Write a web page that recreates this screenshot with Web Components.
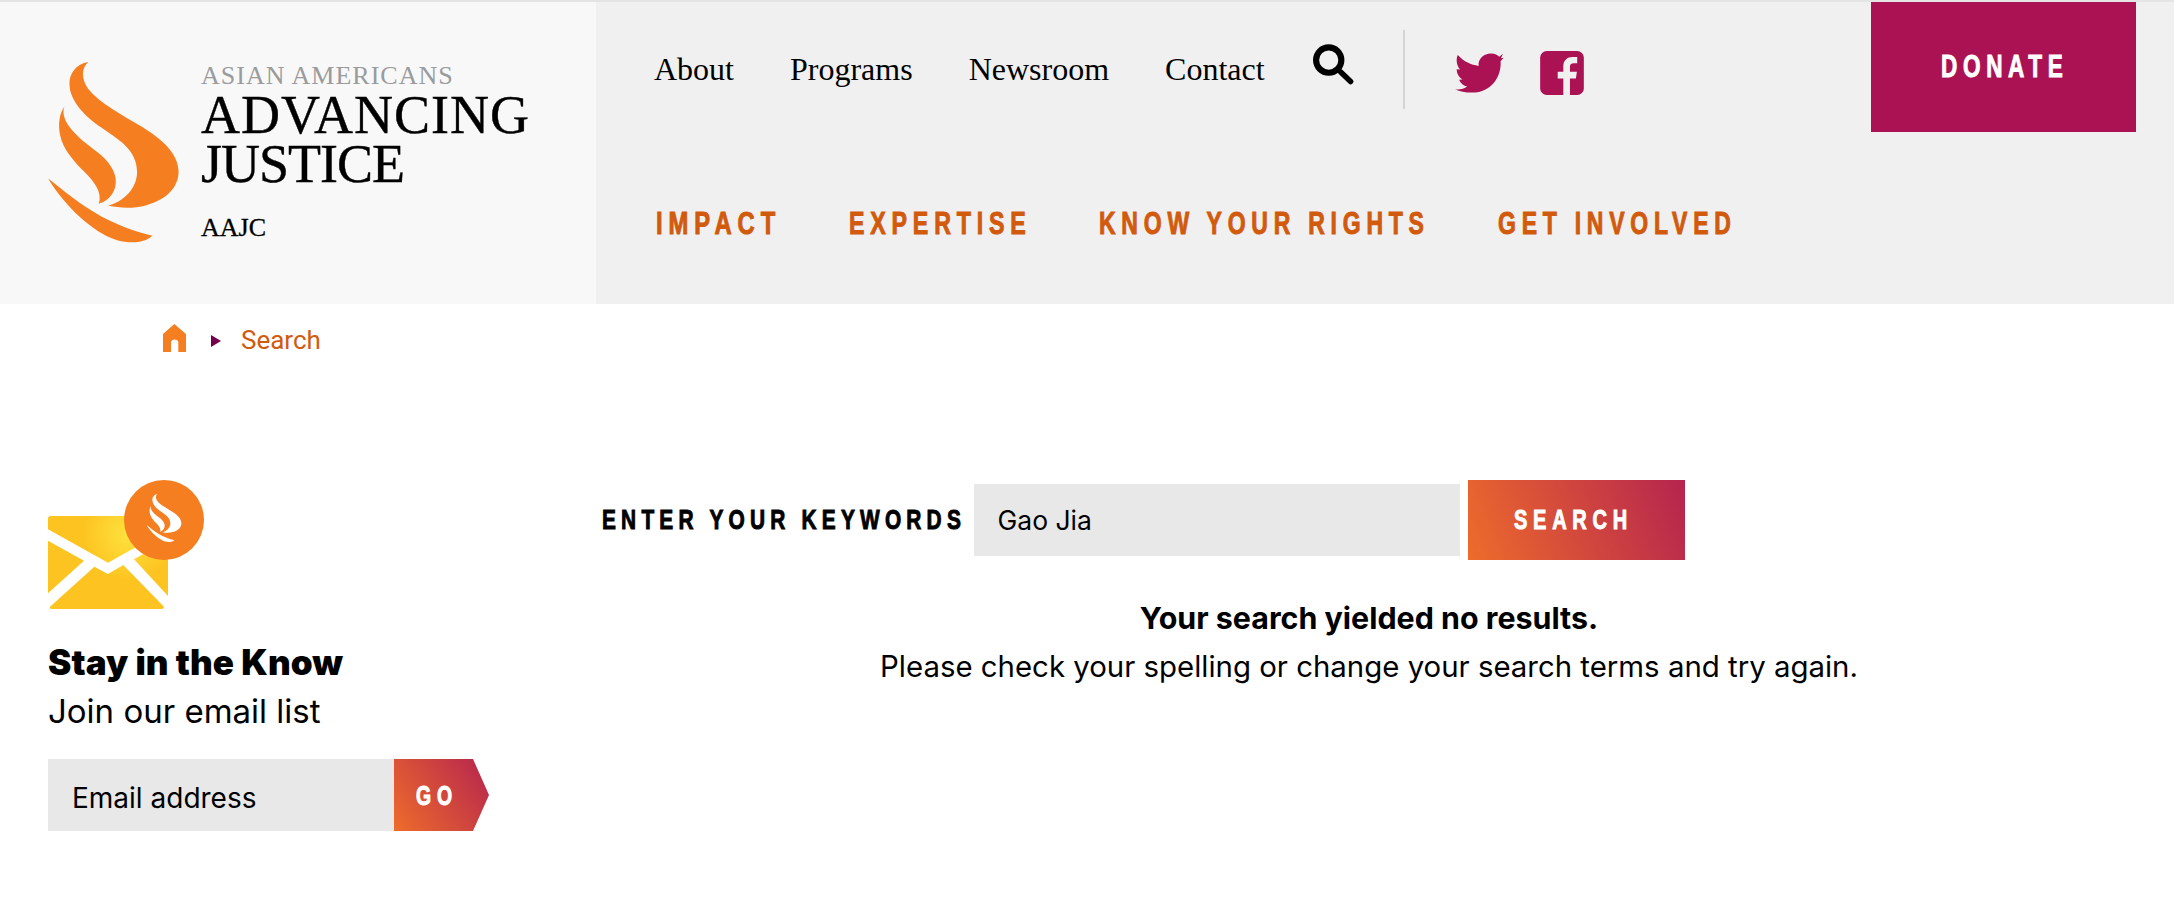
<!DOCTYPE html>
<html lang="en">
<head>
<meta charset="utf-8">
<title>Search | Asian Americans Advancing Justice - AAJC</title>
<style>
  html, body { margin: 0; background: #fff; }
  body { font-family: "Inter", "Liberation Sans", sans-serif; color: #000; }
</style>
</head>
<body>
<site-header>
  <site-logo slot="logo"></site-logo>
  <utility-nav slot="utility"></utility-nav>
  <main-nav slot="main"></main-nav>
</site-header>
<bread-crumb>Search</bread-crumb>
<page-layout>
  <sign-up slot="aside"></sign-up>
  <search-panel query="Gao Jia"></search-panel>
</page-layout>

<script>
const FLAME_UPPER = "M176 66C140 72 118 100 120 135C122 180 160 225 215 262C260 295 322 325 322 395C322 445 280 485 236 495C270 503 310 505 350 494C410 478 447 440 446 392C444 340 400 300 340 262C280 225 210 190 175 145C155 115 155 85 176 66Z";
const FLAME_MIDDLE = "M105 198C90 220 85 250 92 285C100 325 130 360 165 395C195 425 218 455 208 490C240 480 262 450 258 415C254 380 225 350 190 325C150 295 110 260 103 225C101 215 102 205 105 198Z";
const FLAME_LOWER = "M56 414C90 470 150 540 220 580C270 610 335 615 368 585C300 570 230 540 170 500C125 470 90 440 56 414Z";
const HEAVY = '"Liberation Sans", sans-serif';

// no condensed face is installed, so squeeze the text to the width it has to fill
class NarrowText extends HTMLElement {
    connectedCallback() {
        this.attachShadow({mode: "open"});
        this.shadowRoot.innerHTML = `
            <style>
            :host { display: inline-block; white-space: nowrap; font-weight: bold; -webkit-text-stroke: 1px currentColor; }
            span { display: inline-block; transform-origin: 0 50%; }
            </style>
            <span><slot></slot></span>
        `;
        let width = Number(this.getAttribute("width"));
        let span = this.shadowRoot.querySelector("span");
        let spacing = parseFloat(getComputedStyle(this).letterSpacing) || 0;
        span.style.transform = `scaleX(${width / (span.offsetWidth - spacing)})`;
        this.style.width = width + "px";
    }
}

class SiteHeader extends HTMLElement {
    connectedCallback() {
        this.attachShadow({mode: "open"});
        this.shadowRoot.innerHTML = `
            <style>
            :host { display: flex; height: 302px; border-top: 2px solid #e4e4e4; background: #f0f0f0; }
            .logo { flex: 0 0 596px; background: #f8f8f8; }
            .nav { flex: 1; min-width: 0; display: flex; flex-direction: column; }
            </style>
            <div class="logo"><slot name="logo"></slot></div>
            <div class="nav">
                <slot name="utility"></slot>
                <slot name="main"></slot>
            </div>
        `;
    }
}

class SiteLogo extends HTMLElement {
    connectedCallback() {
        this.attachShadow({mode: "open"});
        this.shadowRoot.innerHTML = `
            <style>
            :host { display: flex; padding: 60px 0 0 48px; font-family: "Liberation Serif", serif; color: #000; }
            svg { width: 131px; height: 184px; flex: none; }
            .words { margin-left: 22px; display: flex; flex-direction: column; margin-top: 1px; }
            .asian { font-size: 26px; line-height: 26px; letter-spacing: 1px; color: #9a9b9d; white-space: nowrap; }
            .name { font-size: 54px; line-height: 49px; white-space: nowrap; -webkit-text-stroke: .4px #000; }
            .first { letter-spacing: 1px; margin-top: 1.5px; }
            .second { letter-spacing: -1px; }
            .short { font-size: 26px; line-height: 30px; margin-top: 24.5px; -webkit-text-stroke: .3px #000; }
            </style>
            <svg viewBox="56 66 391 550" fill="#f57e20" aria-hidden="true">
                <path d="${FLAME_UPPER}"/><path d="${FLAME_MIDDLE}"/><path d="${FLAME_LOWER}"/>
            </svg>
            <div class="words">
                <div class="asian">ASIAN AMERICANS</div>
                <div class="name first">ADVANCING</div>
                <div class="name second">JUSTICE</div>
                <div class="short">AAJC</div>
            </div>
        `;
    }
}

class UtilityNav extends HTMLElement {
    connectedCallback() {
        this.attachShadow({mode: "open"});
        this.shadowRoot.innerHTML = `
            <style>
            :host { display: flex; align-items: flex-start; height: 130px; padding: 0 38px 0 58px; }
            .link { font: 32px "Liberation Serif", serif; color: #000; text-decoration: none; margin-top: 49px; margin-right: 56px; }
            .link.last { margin-right: 48px; }
            .search { width: 41px; height: 41px; margin-top: 42px; flex: none; }
            .rule { width: 2px; height: 79px; background: #d4d4d4; margin: 28px 50px 0 49px; flex: none; }
            .twitter { width: 49px; height: 40px; margin-top: 51px; flex: none; }
            .facebook { width: 44px; height: 44px; margin: 49px 0 0 36px; flex: none; }
            .donate {
                margin-left: auto; width: 265px; height: 130px; background: #ab1254; color: #fff; flex: none;
                display: flex; align-items: center; justify-content: center; text-decoration: none; box-sizing: border-box;
                font: 32px ${HEAVY}; letter-spacing: 8px; padding: 0 3px 2px 0;
            }
            </style>
            <a class="link" href="#">About</a><a class="link" href="#">Programs</a><a class="link" href="#">Newsroom</a><a class="link last" href="#">Contact</a>
            <svg class="search" viewBox="69 71 120 120" aria-hidden="true">
                <circle cx="115" cy="118" r="37" fill="none" stroke="#000" stroke-width="18"/>
                <path d="M150 153L179 181" stroke="#000" stroke-width="16" stroke-linecap="round"/>
            </svg>
            <div class="rule"></div>
            <svg class="twitter" viewBox="495 98 145 118" fill="#ab1254" aria-hidden="true">
                <path d="M503 104C522 124 542 133 565 136C562 114 582 98 603 99C613 99 621 103 626 109L637 100L631 113L639 112L630 122C633 165 605 215 545 215C526 215 508 212 495 205C508 207 522 204 531 197C520 195 512 188 507 177L517 176C506 170 500 158 500 146L510 147C500 135 497 118 503 104Z"/>
            </svg>
            <svg class="facebook" viewBox="750 92 132 133" aria-hidden="true">
                <rect x="750" y="92" width="132" height="133" rx="20" fill="#ab1254"/>
                <path d="M820 225V175H803V155H820V138C820 120 832 110 848 110H862V129H852C843 129 840 133 840 140V155H861L858 175H840V225Z" fill="#f0f0f0"/>
            </svg>
            <a class="donate" href="#"><narrow-text width="122">DONATE</narrow-text></a>
        `;
    }
}

class MainNav extends HTMLElement {
    connectedCallback() {
        this.attachShadow({mode: "open"});
        this.shadowRoot.innerHTML = `
            <style>
            :host { display: flex; gap: 73.5px; padding: 71px 0 0 60px; font: 32px/40px ${HEAVY}; letter-spacing: 8px; color: #d25a0d; }
            </style>
            <narrow-text width="119">IMPACT</narrow-text>
            <narrow-text width="177">EXPERTISE</narrow-text>
            <narrow-text width="325">KNOW YOUR RIGHTS</narrow-text>
            <narrow-text width="233">GET INVOLVED</narrow-text>
        `;
    }
}

class BreadCrumb extends HTMLElement {
    connectedCallback() {
        this.attachShadow({mode: "open"});
        this.shadowRoot.innerHTML = `
            <style>
            :host { display: flex; align-items: flex-start; height: 176px; padding: 0 0 0 163px; box-sizing: border-box; }
            .home { width: 23px; height: 28px; margin-top: 20px; flex: none; }
            .arrow { width: 0; height: 0; border-left: 10px solid #74004e; border-top: 6px solid transparent; border-bottom: 6px solid transparent; margin: 31px 20px 0 25px; flex: none; }
            .here { font: 26px/30px "Roboto", sans-serif; color: #d25a0d; margin-top: 21px; }
            </style>
            <svg class="home" viewBox="38 42 69 84" aria-hidden="true">
                <path d="M72 42L107 72V126H84V98C84 85 62 85 62 98V126H38V72Z" fill="#f57e20"/>
            </svg>
            <span class="arrow"></span>
            <span class="here"><slot></slot></span>
        `;
    }
}

class PageLayout extends HTMLElement {
    connectedCallback() {
        this.attachShadow({mode: "open"});
        this.shadowRoot.innerHTML = `
            <style>
            :host { display: grid; grid-template-columns: 554px 1fr; padding: 0 38px 60px 48px; }
            </style>
            <slot name="aside"></slot>
            <slot></slot>
        `;
    }
}

class SignUp extends HTMLElement {
    connectedCallback() {
        this.attachShadow({mode: "open"});
        this.shadowRoot.innerHTML = `
            <style>
            :host { display: block; font-family: "Inter", sans-serif; }
            svg { display: block; width: 156px; height: 129px; }
            h2 { font-size: 35px; line-height: 40px; font-weight: 900; margin: 33px 0 0; letter-spacing: .1px; }
            p { font-size: 33px; line-height: 40px; margin: 9px 0 0; }
            form { display: flex; width: 441px; height: 72px; margin-top: 28px; }
            .field { flex: 1; background: #e8e8e8; font-size: 28px; line-height: 78px; padding-left: 24px; }
            .go {
                flex: 0 0 95px; background: linear-gradient(55deg, #ee6c2b, #b5244f);
                clip-path: polygon(0 0, 79px 0, 100% 50%, 79px 100%, 0 100%);
                color: #fff; font: 27px/74px ${HEAVY}; letter-spacing: 8px; padding-left: 22px; box-sizing: border-box;
            }
            </style>
            <svg viewBox="24 30 468 387" aria-hidden="true">
                <defs>
                    <radialGradient id="glow" gradientUnits="userSpaceOnUse" cx="270" cy="190" r="140">
                        <stop offset="0" stop-color="#ffe33f"/><stop offset="1" stop-color="#fdc421"/>
                    </radialGradient>
                </defs>
                <g fill="url(#glow)">
                    <path d="M24 146Q24 138 32 138H384V178L204 278L24 178Z"/>
                    <path d="M24 212L132 272L24 370Z"/>
                    <path d="M30 410L163 290L204 312L250 285L372 410Q372 417 365 417H36Q28 417 30 410Z"/>
                    <path d="M282 268L384 210V378Z"/>
                </g>
                <circle cx="372" cy="150" r="120" fill="#f57e20"/>
                <g fill="#fff" transform="translate(305 54.4) scale(.267)">
                    <path d="${FLAME_UPPER}"/><path d="${FLAME_MIDDLE}"/><path d="${FLAME_LOWER}"/>
                </g>
            </svg>
            <h2>Stay in the Know</h2>
            <p>Join our email list</p>
            <form>
                <div class="field">Email address</div>
                <div class="go"><narrow-text width="36">GO</narrow-text></div>
            </form>
        `;
    }
}

class SearchPanel extends HTMLElement {
    connectedCallback() {
        this.attachShadow({mode: "open"});
        this.shadowRoot.innerHTML = `
            <style>
            :host { display: block; font-family: "Inter", sans-serif; text-align: center; }
            form { display: flex; align-items: center; height: 80px; text-align: left; }
            .label { font: bold 28px ${HEAVY}; letter-spacing: 7px; margin-right: 13px; color: #000; }
            .field { width: 462.5px; height: 72px; padding-left: 23.5px; background: #e8e8e8; font-size: 26.5px; line-height: 72px; }
            .submit {
                width: 171px; height: 80px; margin-left: 8px; padding-left: 46px; background: linear-gradient(68deg, #ee6c2b, #b5244f);
                color: #fff; font: 28px/80px ${HEAVY}; letter-spacing: 8px;
            }
            h3 { font-size: 30.4px; line-height: 40px; font-weight: 700; margin: 38px 0 0; }
            p { font-size: 29.4px; line-height: 40px; margin: 9px 0 0; }
            </style>
            <form>
                <narrow-text class="label" width="359">ENTER YOUR KEYWORDS</narrow-text>
                <div class="field"></div>
                <div class="submit"><narrow-text width="113">SEARCH</narrow-text></div>
            </form>
            <h3>Your search yielded no results.</h3>
            <p>Please check your spelling or change your search terms and try again.</p>
        `;
        this.shadowRoot.querySelector(".field").textContent = this.getAttribute("query");
    }
}

customElements.define("narrow-text", NarrowText);
customElements.define("site-header", SiteHeader);
customElements.define("site-logo", SiteLogo);
customElements.define("utility-nav", UtilityNav);
customElements.define("main-nav", MainNav);
customElements.define("bread-crumb", BreadCrumb);
customElements.define("page-layout", PageLayout);
customElements.define("sign-up", SignUp);
customElements.define("search-panel", SearchPanel);
</script>
</body>
</html>
